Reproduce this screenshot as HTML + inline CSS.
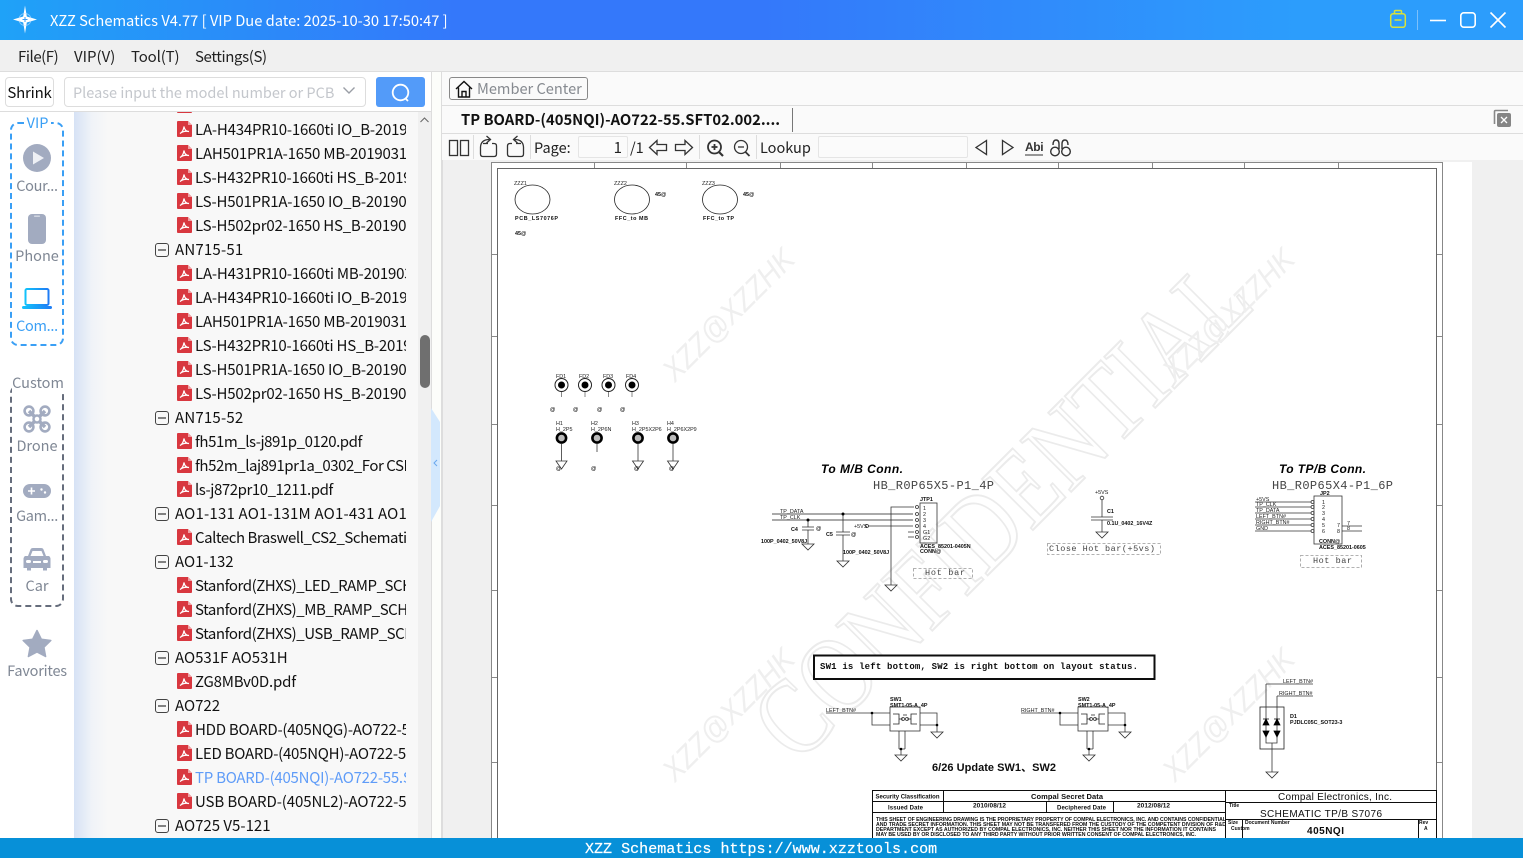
<!DOCTYPE html>
<html><head><meta charset="utf-8"><title>XZZ Schematics</title>
<style>
*{box-sizing:border-box}
html,body{margin:0;padding:0;width:1523px;height:858px;overflow:hidden;background:#fff;font-family:"Noto Sans CJK SC","Liberation Sans",sans-serif;font-size:15px;color:#111}
.a{position:absolute;white-space:nowrap}
#title{left:0;top:0;width:1523px;height:40px;background:linear-gradient(90deg,#1fa2f8 0%,#3478fa 30%,#3478fa 50%,#2c9dfc 85%,#2c9dfc 100%)}
#menu{left:0;top:40px;width:1523px;height:32px;background:#f0f0f0;border-bottom:1px solid #ddd}
.m{top:47px;line-height:20px;font-size:15px;color:#222}
#tree{left:74px;top:112px;width:344px;height:726px;background:linear-gradient(90deg,#d6e2f5 0,#f0f3f8 18px,#f8f8f8 34px);overflow:hidden}
#clip{position:absolute;left:0;top:0;width:332px;height:726px;overflow:hidden}
.r{position:relative;height:24px;line-height:24px;white-space:nowrap;font-size:15px;color:#111}
.f{padding-left:121px;letter-spacing:-.2px}
.d{padding-left:101px}
.l{letter-spacing:-.45px}
.h{letter-spacing:-.25px}
.w{letter-spacing:.2px}
.r svg{position:absolute;top:3px}
.f svg{left:103px;width:15px;height:16px}
.d svg{left:81px;width:14px;height:14px;top:5px}
.s{font-size:14.5px;color:#7f8794;text-align:center;width:74px;left:0;line-height:20px}
text{font-family:"Liberation Sans","Noto Sans CJK SC",sans-serif}
.t{font-size:5.4px;fill:#222}
.b{font-size:5.4px;fill:#111;font-weight:bold}
</style></head><body>
<svg width="0" height="0" style="position:absolute"><defs>
<symbol id="pdf" viewBox="0 0 15 16"><path d="M1 0H11L15 4V15a1 1 0 0 1-1 1H1a1 1 0 0 1-1-1V1A1 1 0 0 1 1 0Z" fill="#d8373f"/><path d="M11 0V4H15Z" fill="#f0a0a4"/><path d="M3 12.5C5 11.5 6.5 9 7 5.5C7.5 9 9.5 10.5 12 10.5C9 10 5.5 10.5 3 12.5Z" fill="none" stroke="#fff" stroke-width="1.2"/></symbol>
<symbol id="minus" viewBox="0 0 14 14"><rect x=".5" y=".5" width="13" height="13" rx="2.5" fill="none" stroke="#444"/><path d="M3 7H11" stroke="#333" stroke-width="1.2"/></symbol>
</defs></svg>

<div class="a" id="title"></div>
<svg class="a" style="left:11px;top:4px" width="28" height="32" viewBox="0 0 28 32"><path d="M14 1.500L15.800 12.500 26 15.500 15.800 18.500 14 29.500 12.200 18.500 2 15.500 12.200 12.500Z" fill="#fff"/><circle cx="14" cy="15.500" r="6" fill="none" stroke="#cfe6ff" stroke-width="1" opacity=".55"/><path d="M14 13V18M11.500 15.500H16.500" stroke="#3a9cf6" stroke-width="1"/></svg>
<div class="a" style="left:50px;top:10px;line-height:22px;font-size:14.7px;color:#fff">XZZ Schematics V4.77 [ VIP Due date: 2025-10-30 17:50:47 ]</div>
<svg class="a" style="left:1385px;top:5px" width="130" height="30" viewBox="0 0 130 30" fill="none">
<g stroke="#d9e23a" stroke-width="1.5"><rect x="5.7" y="8.7" width="14.6" height="13.6" rx="2.5"/><path d="M9.5 8.5V6.5Q9.5 5.5 10.5 5.5H15.5Q16.5 5.5 16.5 6.5V8.5M9.5 15H16.5"/></g>
<path d="M32.5 5V25" stroke="#7cc0fb"/>
<g stroke="#fff" stroke-width="1.6"><path d="M45 15.5H61"/><rect x="75.8" y="7.8" width="14.4" height="14.4" rx="3"/><path d="M105.5 7.5L120.5 22.5M120.5 7.5L105.5 22.5"/></g></svg>

<div class="a" id="menu"></div>
<div class="a m" style="left:18px;letter-spacing:-.45px">File(F)</div><div class="a m" style="left:74px">VIP(V)</div><div class="a m" style="left:131px;letter-spacing:-.15px">Tool(T)</div><div class="a m" style="left:195px;letter-spacing:-.38px">Settings(S)</div>

<!-- left column -->
<div class="a" style="left:0;top:72px;width:431px;height:40px;background:#fff;border-bottom:1px solid #ddd"></div>
<div class="a" style="left:5px;top:77px;width:49px;height:30px;border:1px solid #ddd;border-radius:4px;line-height:30px;text-align:center;font-size:15px;color:#111;background:#fff;letter-spacing:-.2px">Shrink</div>
<div class="a" style="left:64px;top:77px;width:302px;height:30px;border:1px solid #ddd;border-radius:4px;line-height:30px;padding-left:8px;font-size:14.5px;color:#c4c7cc;background:#fff">Please input the model number or PCB</div>
<svg class="a" style="left:342px;top:86px" width="14" height="10" fill="none"><path d="M1.5 1.5L7 7L12.5 1.5" stroke="#9a9ea6" stroke-width="1.4"/></svg>
<div class="a" style="left:376px;top:77px;width:49px;height:30px;background:#539bf9;border-radius:3px"></div>
<svg class="a" style="left:390px;top:82px" width="22" height="21" fill="none" stroke="#fff" stroke-width="1.8"><circle cx="10.5" cy="10.5" r="7.8"/><path d="M15.5 16.5L18 19"/></svg>

<div class="a" id="tree"><div id="clip">
<div class="r f" style="margin-top:-18px"><svg><use href="#pdf"/></svg>LA-H431PR10-1660ti MB-20190311</div>
<div class="r f"><svg><use href="#pdf"/></svg>LA-H434PR10-1660ti IO_B-20190311</div>
<div class="r f"><svg><use href="#pdf"/></svg>LAH501PR1A-1650 MB-20190311</div>
<div class="r f"><svg><use href="#pdf"/></svg>LS-H432PR10-1660ti HS_B-20190311</div>
<div class="r f"><svg><use href="#pdf"/></svg>LS-H501PR1A-1650 IO_B-20190311</div>
<div class="r f"><svg><use href="#pdf"/></svg>LS-H502pr02-1650 HS_B-20190311</div>
<div class="r d w"><svg><use href="#minus"/></svg>AN715-51</div>
<div class="r f"><svg><use href="#pdf"/></svg>LA-H431PR10-1660ti MB-20190311</div>
<div class="r f"><svg><use href="#pdf"/></svg>LA-H434PR10-1660ti IO_B-20190311</div>
<div class="r f"><svg><use href="#pdf"/></svg>LAH501PR1A-1650 MB-20190311</div>
<div class="r f"><svg><use href="#pdf"/></svg>LS-H432PR10-1660ti HS_B-20190311</div>
<div class="r f"><svg><use href="#pdf"/></svg>LS-H501PR1A-1650 IO_B-20190311</div>
<div class="r f"><svg><use href="#pdf"/></svg>LS-H502pr02-1650 HS_B-20190311</div>
<div class="r d w"><svg><use href="#minus"/></svg>AN715-52</div>
<div class="r f l"><svg><use href="#pdf"/></svg>fh51m_ls-j891p_0120.pdf</div>
<div class="r f l"><svg><use href="#pdf"/></svg>fh52m_laj891pr1a_0302_For CSD.pdf</div>
<div class="r f l"><svg><use href="#pdf"/></svg>ls-j872pr10_1211.pdf</div>
<div class="r d w"><svg><use href="#minus"/></svg>AO1-131 AO1-131M AO1-431 AO1-431M</div>
<div class="r f l"><svg><use href="#pdf"/></svg>Caltech Braswell_CS2_Schematic.pdf</div>
<div class="r d"><svg><use href="#minus"/></svg>AO1-132</div>
<div class="r f l"><svg><use href="#pdf"/></svg>Stanford(ZHXS)_LED_RAMP_SCH.pdf</div>
<div class="r f l"><svg><use href="#pdf"/></svg>Stanford(ZHXS)_MB_RAMP_SCH.pdf</div>
<div class="r f l"><svg><use href="#pdf"/></svg>Stanford(ZHXS)_USB_RAMP_SCH.pdf</div>
<div class="r d"><svg><use href="#minus"/></svg>AO531F AO531H</div>
<div class="r f"><svg><use href="#pdf"/></svg>ZG8MBv0D.pdf</div>
<div class="r d"><svg><use href="#minus"/></svg>AO722</div>
<div class="r f h"><svg><use href="#pdf"/></svg>HDD BOARD-(405NQG)-AO722-55</div>
<div class="r f h"><svg><use href="#pdf"/></svg>LED BOARD-(405NQH)-AO722-55</div>
<div class="r f h" style="color:#5f9cf8"><svg><use href="#pdf"/></svg>TP BOARD-(405NQI)-AO722-55.SFT</div>
<div class="r f" style="letter-spacing:-.1px"><svg><use href="#pdf"/></svg>USB BOARD-(405NL2)-AO722-55</div>
<div class="r d"><svg><use href="#minus"/></svg>AO725 V5-121</div>
</div></div>
<div class="a" style="left:418px;top:112px;width:13px;height:726px;background:#f0f0f0"></div>
<svg class="a" style="left:418px;top:114px" width="13" height="12" fill="none"><path d="M2.5 8L6.5 4L10.5 8" stroke="#666" stroke-width="1"/></svg>
<div class="a" style="left:420px;top:335px;width:10px;height:53px;background:#6f6f6f;border-radius:5px"></div>
<div class="a" style="left:431px;top:72px;width:10px;height:766px;background:#fcfdfa;border-left:1px solid #ddd"></div>
<svg class="a" style="left:431px;top:408px" width="10" height="114"><path d="M0 0L9 14V98L0 114Z" fill="#d3e8fd"/><path d="M6 52L3 55L6 58" stroke="#6aa8ee" stroke-width="1" fill="none"/></svg>
<div class="a" style="left:441px;top:72px;width:1px;height:766px;background:#ddd"></div>

<!-- sidebar -->
<div class="a" style="left:10px;top:122px;width:54px;height:224px;border:2px dashed #3a9ff5;border-radius:8px"></div>
<div class="a" style="left:24px;top:113px;width:27px;background:#fff;text-align:center;color:#3a9ff5;font-size:14.5px;line-height:20px">VIP</div>
<svg class="a" style="left:23px;top:144px" width="28" height="28"><circle cx="14" cy="14" r="14" fill="#a2abc0"/><path d="M10 7.5L21 14 10 20.5Z" fill="#eef0f5"/></svg>
<div class="a s" style="top:176px;letter-spacing:-.3px">Cour...</div>
<svg class="a" style="left:28px;top:214px" width="18" height="30"><rect width="18" height="30" rx="4" fill="#a2abc0"/><rect x="6" y="1.5" width="6" height="1.4" rx=".7" fill="#d7dbe5"/></svg>
<div class="a s" style="top:246px">Phone</div>
<svg class="a" style="left:22px;top:288px" width="30" height="22"><defs><linearGradient id="cg" x1="0" x2="1" y1="0" y2="0"><stop offset="0" stop-color="#12c2fb"/><stop offset="1" stop-color="#1f7cf5"/></linearGradient></defs><rect x="3.5" y="1" width="23" height="16" rx="1.5" fill="none" stroke="url(#cg)" stroke-width="2"/><rect y="18" width="30" height="3" rx="1.5" fill="url(#cg)"/></svg>
<div class="a s" style="top:316px;color:#3a9ff5;letter-spacing:-.3px">Com...</div>

<div class="a" style="left:10px;top:385px;width:54px;height:222px;border:2px dashed #666d7c;border-radius:8px"></div>
<div class="a" style="left:12px;top:373px;width:52px;background:#fff;text-align:center;color:#7f8794;font-size:14.5px;line-height:20px">Custom</div>
<svg class="a" style="left:23px;top:405px" width="28" height="28" fill="none" stroke="#a2abc0"><path d="M6 6L22 22M22 6L6 22" stroke-width="3.500"/><g stroke-width="2.600"><circle cx="6" cy="6" r="4.400"/><circle cx="22" cy="6" r="4.400"/><circle cx="6" cy="22" r="4.400"/><circle cx="22" cy="22" r="4.400"/></g><circle cx="14" cy="14" r="3.500" fill="#fff" stroke-width="2.500"/></svg>
<div class="a s" style="top:436px">Drone</div>
<svg class="a" style="left:23px;top:484px" width="28" height="14"><rect width="28" height="14" rx="7" fill="#a2abc0"/><path d="M5 7H12M8.5 3.5V10.500" stroke="#fff" stroke-width="1.6"/><circle cx="18.500" cy="5.500" r="1.200" fill="#fff"/><circle cx="22" cy="8.500" r="1.200" fill="#fff"/></svg>
<div class="a s" style="top:506px;letter-spacing:-.3px">Gam...</div>
<svg class="a" style="left:23px;top:547px" width="28" height="24"><path d="M5 9L7.500 2.500Q8 1 10 1H18Q20 1 20.500 2.500L23 9H26Q27.500 10 27.500 11.500V21H24V23.500H20V21H8V23.500H4V21H.5V11.500Q.5 10 2 9Z" fill="#a2abc0"/><path d="M7.500 9L9.500 4H18.500L20.500 9Z" fill="#fff"/><rect x="3" y="13" width="5" height="3" rx="1.500" fill="#fff"/><rect x="20" y="13" width="5" height="3" rx="1.500" fill="#fff"/><rect x="10" y="14" width="8" height="2" fill="#fff"/></svg>
<div class="a s" style="top:576px">Car</div>
<svg class="a" style="left:22px;top:629px" width="30" height="29"><path d="M15 1.500L19.300 10.200 28.800 11.500 21.900 18.200 23.600 27.500 15 23 6.400 27.500 8.100 18.200 1.200 11.500 10.700 10.200Z" fill="#a2abc0" stroke="#a2abc0" stroke-width="1.500" stroke-linejoin="round"/></svg>
<div class="a s" style="top:661px;letter-spacing:-.2px">Favorites</div>

<!-- right header -->
<div class="a" style="left:442px;top:72px;width:1081px;height:88px;background:#fafafa"></div>
<div class="a" style="left:442px;top:105px;width:1081px;height:1px;background:#ddd"></div>
<div class="a" style="left:442px;top:133px;width:1081px;height:1px;background:#ddd"></div>
<div class="a" style="left:449px;top:77px;width:139px;height:23px;border:1px solid #888;border-radius:3px;background:#fafafa;line-height:21px;padding-left:27px;color:#868a90;font-size:14.6px">Member Center</div>
<svg class="a" style="left:455px;top:80px" width="18" height="18" fill="none" stroke="#111" stroke-width="1.400"><path d="M1 9L9 1.500 17 9M3.500 7.500V17H14.500V7.500M7 17V11.500H11V17"/></svg>
<div class="a" style="left:461px;top:109px;line-height:22px;font-weight:700;font-size:14.8px;color:#111">TP BOARD-(405NQI)-AO722-55.SFT02.002....</div>
<div class="a" style="left:792px;top:108px;width:1px;height:24px;background:#777"></div>
<svg class="a" style="left:1493px;top:109px" width="19" height="19"><path d="M1.500 15V2.500Q1.500 1.500 2.500 1.500H15" fill="none" stroke="#888" stroke-width="1.600"/><rect x="4" y="4" width="14" height="14" rx="2" fill="#858585"/><path d="M8 8L14 14M14 8L8 14" stroke="#fff" stroke-width="1.300"/></svg>

<!-- toolbar -->
<svg class="a" style="left:442px;top:134px" width="640" height="26" fill="none" stroke="#333" stroke-width="1.300">
<rect x="7.500" y="6.500" width="8" height="15"/><rect x="18.500" y="6.500" width="8" height="15"/>
<path d="M31.500 1V25M88.500 1V25M257.500 1V25M314.500 1V25" stroke="#ddd" stroke-width="1"/>
<path d="M38.500 13V20Q38.500 22.500 41 22.500H52Q54.500 22.500 54.500 20V12Q54.500 9.500 52 9.500H50M38.500 13Q39 5.500 47.500 5.500M44.500 2L48.500 5.500 44.500 9M41 9.500H46"/>
<path d="M81.500 13V20Q81.500 22.500 79 22.500H68Q65.500 22.500 65.500 20V12Q65.500 9.500 68 9.500H70M81.500 13Q81 5.500 72.500 5.500M75.500 2L71.500 5.500 75.500 9M74 9.500H79"/>
<path d="M207.500 13.500L215 6.500V10.500H224.500V16.500H215V20.500Z"/><path d="M250.500 13.500L243 6.500V10.500H233.500V16.500H243V20.500Z"/>
<circle cx="272.500" cy="13" r="6.500" stroke-width="1.800"/><path d="M277 18L281 22" stroke-width="2.200"/><path d="M269.500 13H275.500M272.500 10V16" stroke-width="1.800"/>
<circle cx="299" cy="13" r="6.500"/><path d="M303.500 18L307.500 22" stroke-width="1.800"/><path d="M296 13H302"/>
<path d="M544.500 6.500L534 13.500 544.500 20.500ZM560.500 6.500L571 13.500 560.500 20.500Z"/>
<path d="M583 21H601" stroke-width="1"/>
<path d="M611 11Q611 6 614 6T617 10V15M620 15V10Q620 6 623 6T626 11" stroke-width="1.400"/><circle cx="613" cy="17.500" r="4.300" stroke-width="1.400"/><circle cx="624" cy="17.500" r="4.300" stroke-width="1.400"/>
</svg>
<div class="a" style="left:1025px;top:139px;line-height:16px;font-family:'Liberation Sans',sans-serif;font-size:12px;font-weight:700;color:#333;letter-spacing:-.4px">Abi</div>
<div class="a" style="left:534px;top:138px;line-height:20px;font-size:14.5px;color:#222">Page:</div>
<div class="a" style="left:578px;top:136px;width:50px;height:22px;border:1px solid #e5e5e5;background:#fbfbfb;border-radius:2px;text-align:right;padding-right:5px;line-height:21px;color:#222">1</div>
<div class="a" style="left:630px;top:138px;line-height:20px;font-size:14.5px;color:#222">/1</div>
<div class="a" style="left:760px;top:138px;line-height:20px;font-size:14.5px;color:#222">Lookup</div>
<div class="a" style="left:818px;top:136px;width:150px;height:22px;border:1px solid #e5e5e5;background:#fbfbfb;border-radius:2px"></div>

<!-- document area -->
<div class="a" style="left:442px;top:160px;width:1081px;height:678px;background:#f0f0f0"></div>
<div class="a" style="left:442px;top:160px;width:1px;height:678px;background:#ddd"></div>
<svg class="a" style="left:0;top:0" width="1523" height="858" viewBox="0 0 1523 858">
<defs><filter id="bl" filterUnits="userSpaceOnUse" x="480" y="160" width="1000" height="700"><feGaussianBlur stdDeviation=".3"/></filter></defs>
<rect x="491" y="162" width="981" height="680" fill="#fff"/>
<g fill="none" stroke="#555" stroke-width="1">
<rect x="491.500" y="162.500" width="951" height="690" stroke="#888"/>
<rect x="497.500" y="168.500" width="939" height="690" stroke="#666"/>
<path d="M594.500 163V168M686.500 163V168M780.500 163V168M872.500 163V168M966.500 163V168M1058.500 163V168M1152.500 163V168M1244.500 163V168M1338.500 163V168" stroke="#888"/>
<path d="M492 254.500H497M492 336.500H497M492 424.500H497M492 505.500H497M492 590.500H497M492 677.500H497M492 762.500H497M1437 254.500H1442M1437 336.500H1442M1437 424.500H1442M1437 505.500H1442M1437 590.500H1442M1437 677.500H1442M1437 762.500H1442" stroke="#888"/>
</g>
<!-- watermarks -->
<text transform="translate(1002 510) rotate(-45)" font-size="110" fill="none" stroke="#ebebeb" stroke-width="2" textLength="650" lengthAdjust="spacingAndGlyphs" x="-325" y="36" style="font-family:'Liberation Serif',serif">CONFIDENTIAL</text>
<g font-size="31" font-style="italic" fill="#efefef">
<text transform="translate(675 383) rotate(-45)" textLength="172" lengthAdjust="spacingAndGlyphs">XZZ@XZZHK</text>
<text transform="translate(1175 383) rotate(-45)" textLength="172" lengthAdjust="spacingAndGlyphs">XZZ@XZZHK</text>
<text transform="translate(675 783) rotate(-45)" textLength="172" lengthAdjust="spacingAndGlyphs">XZZ@XZZHK</text>
<text transform="translate(1175 783) rotate(-45)" textLength="172" lengthAdjust="spacingAndGlyphs">XZZ@XZZHK</text>
</g>
<g filter="url(#bl)">
<!-- top parts -->
<g fill="none" stroke="#222" stroke-width=".8">
<ellipse cx="532.500" cy="199.500" rx="17.500" ry="14.500"/><ellipse cx="632" cy="199.500" rx="17.500" ry="14.500"/><ellipse cx="720" cy="199.500" rx="17.500" ry="14.500"/>
</g>
<g>
<text class="t" x="514" y="185">ZZZ1</text><text class="t" x="614" y="185">ZZZ2</text><text class="t" x="702" y="185">ZZZ3</text>
<text class="b" x="515" y="220" textLength="43">PCB_LS7076P</text><text class="b" x="615" y="220" textLength="33">FFC_to MB</text><text class="b" x="703" y="220" textLength="31">FFC_to TP</text>
<text class="b" x="515" y="235">45@</text><text class="b" x="655" y="196">45@</text><text class="b" x="743" y="196">45@</text>
<text class="t" x="556" y="378">FD1</text><text class="t" x="579" y="378">FD2</text><text class="t" x="603" y="378">FD3</text><text class="t" x="626" y="378">FD4</text>
<text class="b" x="550" y="411">@</text><text class="b" x="573" y="411">@</text><text class="b" x="597" y="411">@</text><text class="b" x="620" y="411">@</text>
<text class="t" x="556" y="425">H1</text><text class="t" x="556" y="431">H_2P5</text><text class="t" x="591" y="425">H2</text><text class="t" x="591" y="431">H_2P6N</text><text class="t" x="632" y="425">H3</text><text class="t" x="632" y="431">H_2P5X2P6</text><text class="t" x="667" y="425">H4</text><text class="t" x="667" y="431">H_2P6X2P9</text>
<text class="b" x="591" y="470">@</text><text class="b" x="556" y="470">@</text><text class="b" x="634" y="470">@</text><text class="b" x="669" y="470">@</text>
</g>
<g fill="#fff" stroke="#222"><circle cx="561.500" cy="385" r="6.500"/><circle cx="585" cy="385" r="6.500"/><circle cx="608.500" cy="385" r="6.500"/><circle cx="632" cy="385" r="6.500"/></g>
<g fill="#000"><circle cx="561.500" cy="385" r="3.500"/><circle cx="585" cy="385" r="3.500"/><circle cx="608.500" cy="385" r="3.500"/><circle cx="632" cy="385" r="3.500"/></g>
<path d="M561.500 392V397M585 392V397M608.500 392V397M632 392V397" stroke="#888" fill="none"/>
<g fill="#bbb" stroke="#000" stroke-width="2.600"><circle cx="561.500" cy="438" r="4.600"/><circle cx="597" cy="438" r="4.600"/><circle cx="638" cy="438" r="4.600"/><circle cx="673" cy="438" r="4.600"/></g>
<g fill="none" stroke="#333" stroke-width=".8"><path d="M561.500 444V461M638 444V461M673 444V461M597 444V452"/>
<path d="M556 461H567L561.500 469ZM632.500 461H643.500L638 469ZM667.500 461H678.500L673 469Z"/></g>
<!-- To M/B -->
<text x="821" y="473" font-size="12" font-weight="bold" font-style="italic" fill="#000" textLength="82">To M/B Conn.</text>
<text x="873" y="489" font-size="12" fill="#444" textLength="121" style="font-family:'Liberation Mono',monospace">HB_R0P65X5-P1_4P</text>
<g fill="none" stroke="#333" stroke-width=".8">
<path d="M772 514H913M772 520H913" stroke="#777" stroke-width="1.200"/>
<rect x="920" y="503" width="17" height="40"/>
<path d="M914 507H891V585M868 526H913M908 532H914M908 537H914"/>
<path d="M885 585H897L891 591Z"/>
<path d="M808 520V527M802 527H814M802 530H814M808 530V544M802 544H814L808 550ZM843 514V532M836 532H850M836 535H850M843 535V561M837 561H849L843 567Z"/>
<circle cx="917" cy="507" r="1.500"/><circle cx="917" cy="514" r="1.500"/><circle cx="917" cy="520" r="1.500"/><circle cx="917" cy="526" r="1.500"/><circle cx="917" cy="532" r="1.500"/><circle cx="917" cy="537" r="1.500"/><circle cx="867" cy="526" r="1.500"/>
<rect x="913.500" y="568.500" width="59" height="10" stroke="#999" stroke-dasharray="3 2"/>
</g>
<circle cx="843" cy="514" r="1.500" fill="#000"/><circle cx="808" cy="520" r="1.500" fill="#000"/>
<g>
<text class="t" x="780" y="513">TP_DATA</text><text class="t" x="780" y="519">TP_CLK</text><text class="b" x="920" y="501">JTP1</text>
<text class="t" x="923" y="510">1</text><text class="t" x="923" y="516">2</text><text class="t" x="923" y="522">3</text><text class="t" x="923" y="528">4</text><text class="t" x="923" y="534">G1</text><text class="t" x="923" y="540">G2</text>
<text class="t" x="854" y="528">+5VS</text><text class="b" x="791" y="531">C4</text><text class="b" x="826" y="536">C5</text><text class="b" x="816" y="530">@</text><text class="b" x="851" y="536">@</text>
<text class="b" x="761" y="543">100P_0402_50V8J</text><text class="b" x="843" y="554">100P_0402_50V8J</text>
<text class="b" x="920" y="548">ACES_85201-0405N</text><text class="b" x="920" y="553">CONN@</text>
</g>
<text x="925" y="575" font-size="8.500" fill="#444" style="font-family:'Liberation Mono',monospace" textLength="40">Hot bar</text>
<!-- C1 -->
<g fill="none" stroke="#333" stroke-width=".8">
<circle cx="1102" cy="498" r="1.800"/><path d="M1102 500V517M1091 517H1113M1091 520H1113M1102 520V532M1096 532H1108L1102 538Z"/>
<rect x="1047.500" y="543.500" width="113" height="11" stroke="#999" stroke-dasharray="3 2"/>
</g>
<g><text class="t" x="1095" y="494">+5VS</text><text class="b" x="1107" y="513">C1</text><text class="b" x="1107" y="525">0.1U_0402_16V4Z</text></g>
<text x="1049" y="551" font-size="8.500" fill="#444" style="font-family:'Liberation Mono',monospace" textLength="106">Close Hot bar(+5vs)</text>
<!-- To TP/B -->
<text x="1279" y="473" font-size="12" font-weight="bold" font-style="italic" fill="#000" textLength="87">To TP/B Conn.</text>
<text x="1272" y="489" font-size="12" fill="#444" textLength="121" style="font-family:'Liberation Mono',monospace">HB_R0P65X4-P1_6P</text>
<g fill="none" stroke="#333" stroke-width=".8">
<rect x="1314" y="496" width="28" height="48"/>
<path d="M1255 502H1311M1255 507H1311M1255 513H1311M1255 519H1311M1255 525H1311M1255 531H1311M1342 526H1362M1342 531H1362"/>
<circle cx="1312.500" cy="502" r="1.500"/><circle cx="1312.500" cy="507" r="1.500"/><circle cx="1312.500" cy="513" r="1.500"/><circle cx="1312.500" cy="519" r="1.500"/><circle cx="1312.500" cy="525" r="1.500"/><circle cx="1312.500" cy="531" r="1.500"/>
<rect x="1300.500" y="555.500" width="61" height="12" stroke="#999" stroke-dasharray="3 2"/>
</g>
<g><text class="t" x="1256" y="501">+5VS</text><text class="t" x="1256" y="506">TP_CLK</text><text class="t" x="1256" y="512">TP_DATA</text><text class="t" x="1256" y="518">LEFT_BTN#</text><text class="t" x="1256" y="524">RIGHT_BTN#</text><text class="t" x="1256" y="530">GND</text>
<text class="b" x="1320" y="495">JP2</text><text class="t" x="1322" y="504">1</text><text class="t" x="1322" y="509">2</text><text class="t" x="1322" y="515">3</text><text class="t" x="1322" y="521">4</text><text class="t" x="1322" y="527">5</text><text class="t" x="1322" y="533">6</text><text class="t" x="1337" y="527">7</text><text class="t" x="1337" y="533">8</text><text class="t" x="1347" y="525">7</text><text class="t" x="1347" y="530">8</text>
<text class="b" x="1319" y="543">CONN@</text><text class="b" x="1319" y="549">ACES_85201-0605</text></g>
<text x="1313" y="563" font-size="8.500" fill="#444" style="font-family:'Liberation Mono',monospace" textLength="39">Hot bar</text>
<!-- SW note -->
<rect x="814" y="655.500" width="340.500" height="23.500" fill="#fff" stroke="#111" stroke-width="2"/>
<text x="820" y="669" font-size="9" font-weight="bold" fill="#111" textLength="318" style="font-family:'Liberation Mono',monospace">SW1 is left bottom, SW2 is right bottom on layout status.</text>
<!-- SW1 / SW2 -->
<g fill="none" stroke="#333" stroke-width=".8">
<rect x="890" y="707" width="30" height="24"/><path d="M826 713H890M872 713V725H890M920 713H937V732M920 725H937M931 732H943L937 738ZM899 731V749M905 731V749M899 749H905M901 749V755M895 755H907L901 761Z"/><path d="M893 714H899V724H893M917 714H911V724H917M899 719H903M907 719H911M903 715H907" stroke="#222"/><circle cx="903" cy="719" r="1.500"/><circle cx="907" cy="719" r="1.500"/>
<rect x="1078" y="707" width="30" height="24"/><path d="M1021 713H1078M1060 713V725H1078M1108 713H1125V732M1108 725H1125M1119 732H1131L1125 738ZM1087 731V749M1093 731V749M1087 749H1093M1089 749V755M1083 755H1095L1089 761Z"/><path d="M1081 714H1087V724H1081M1105 714H1099V724H1105M1087 719H1091M1095 719H1099M1091 715H1095" stroke="#222"/><circle cx="1091" cy="719" r="1.500"/><circle cx="1095" cy="719" r="1.500"/>
</g>
<g fill="#000"><circle cx="872" cy="713" r="1.300"/><circle cx="937" cy="725" r="1.300"/><circle cx="901" cy="749" r="1.300"/><circle cx="1060" cy="713" r="1.300"/><circle cx="1125" cy="725" r="1.300"/><circle cx="1089" cy="749" r="1.300"/></g>
<g><text class="t" x="826" y="712">LEFT_BTN#</text><text class="t" x="1021" y="712">RIGHT_BTN#</text>
<text class="b" x="890" y="701">SW1</text><text class="b" x="890" y="707">SMT1-05-A_4P</text><text class="b" x="1078" y="701">SW2</text><text class="b" x="1078" y="707">SMT1-05-A_4P</text></g>
<text x="932" y="771" font-size="11" font-weight="bold" fill="#111" textLength="124">6/26 Update SW1、SW2</text>
<!-- D1 -->
<g fill="none" stroke="#333" stroke-width=".8"><rect x="1260" y="707" width="24" height="42" stroke="#222"/><path d="M1266 684H1313M1277 696H1313M1266 684V743H1277V696M1272 743V772M1266 772H1278L1272 778Z"/></g>
<path d="M1263 719H1269M1266 719L1263 725H1269ZM1274 719H1280M1277 719L1274 725H1280ZM1263 731H1269L1266 737ZM1274 731H1280L1277 737Z" fill="#000" stroke="#000" stroke-width=".8"/>
<g><text class="t" x="1283" y="683">LEFT_BTN#</text><text class="t" x="1279" y="695">RIGHT_BTN#</text><text class="b" x="1290" y="718">D1</text><text class="b" x="1290" y="724">PJDLC05C_SOT23-3</text></g>
<!-- title block -->
<g fill="none" stroke="#111" stroke-width="1"><rect x="872.500" y="790.500" width="564" height="60"/><path d="M872.500 801.500H1225M872.500 812.500H1225M943.500 790.500V812M1046.500 801.500V812M1113.500 801.500V812M1225.500 790.500V850M1225 802.500H1437M1225 819.500H1437M1242.500 819.500V850M1418.500 819.500V850"/></g>
<g font-weight="bold" fill="#111" font-size="6"><text x="875.500" y="798.500" textLength="64">Security Classification</text><text x="888" y="809.500" textLength="35">Issued Date</text><text x="1057" y="809.500" textLength="49">Deciphered Date</text></g>
<text x="1031" y="799" font-size="7.500" fill="#111" textLength="72" font-weight="bold">Compal Secret Data</text>
<text x="973" y="807.500" font-size="6.500" fill="#111" textLength="33" font-weight="bold">2010/08/12</text><text x="1137" y="807.500" font-size="6.500" fill="#111" textLength="33" font-weight="bold">2012/08/12</text>
<g font-size="5.200" font-weight="bold" fill="#111">
<text x="876" y="821" textLength="350">THIS SHEET OF ENGINEERING DRAWING IS THE PROPRIETARY PROPERTY OF COMPAL ELECTRONICS, INC. AND CONTAINS CONFIDENTIAL</text>
<text x="876" y="826" textLength="350">AND TRADE SECRET INFORMATION. THIS SHEET MAY NOT BE TRANSFERED FROM THE CUSTODY OF THE COMPETENT DIVISION OF R&amp;D</text>
<text x="876" y="831" textLength="340">DEPARTMENT EXCEPT AS AUTHORIZED BY COMPAL ELECTRONICS, INC. NEITHER THIS SHEET NOR THE INFORMATION IT CONTAINS</text>
<text x="876" y="836" textLength="320">MAY BE USED BY OR DISCLOSED TO ANY THIRD PARTY WITHOUT PRIOR WRITTEN CONSENT OF COMPAL ELECTRONICS, INC.</text>
</g>
<text x="1278" y="800" font-size="10" fill="#111" textLength="114">Compal Electronics, Inc.</text>
<text x="1229" y="807" font-size="5" font-weight="bold" fill="#111">Title</text>
<text x="1260" y="817" font-size="10" fill="#111" textLength="122">SCHEMATIC TP/B S7076</text>
<text x="1228" y="824" font-size="5" font-weight="bold" fill="#111">Size</text><text x="1231" y="830" font-size="5" font-weight="bold" fill="#111">Custom</text>
<text x="1245" y="824" font-size="5" font-weight="bold" fill="#111">Document Number</text>
<text x="1307" y="834" font-size="10" font-weight="bold" fill="#111" textLength="37">405NQI</text>
<text x="1419" y="824" font-size="5" font-weight="bold" fill="#111">Rev</text><text x="1424" y="830" font-size="5" font-weight="bold" fill="#111">A</text>
</g>
</svg>

<div class="a" style="left:0;top:838px;width:1523px;height:20px;background:#0790d8"></div>
<div class="a" style="left:585px;top:841px;line-height:17px;font-family:'Liberation Mono',monospace;font-size:15.05px;color:#fff;-webkit-text-stroke:.2px #fff">XZZ Schematics https://www.xzztools.com</div>
</body></html>
